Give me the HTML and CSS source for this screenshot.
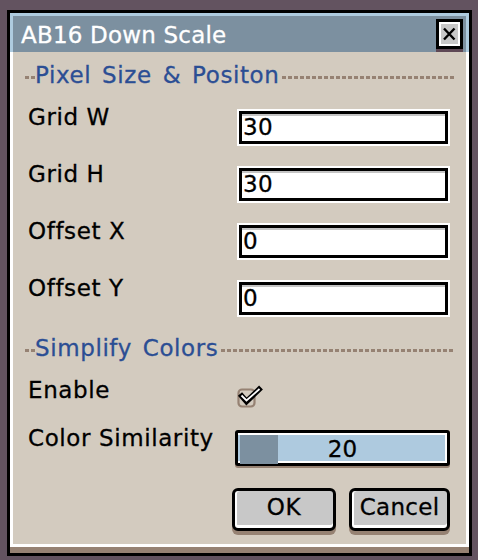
FILE: index.html
```html
<!DOCTYPE html>
<html>
<head>
<meta charset="utf-8">
<title>AB16 Down Scale</title>
<link rel="stylesheet" href="styles.css">
</head>
<body>
<div class="page">
  <div class="dialog">
    <div class="titlebar">
      <span class="title">AB16 Down Scale</span>
      <span class="close">
        <svg width="21" height="24" viewBox="0 0 21 24"><path d="M5 6.5 L15.5 17.5 M15.5 6.5 L5 17.5" stroke="#000" stroke-width="2.4" fill="none"/></svg>
      </span>
    </div>
    <div class="body">
      <div class="section">
        <span class="dash lead"></span>
        <span class="section-title">Pixel Size &amp; Positon</span>
        <span class="dash fill"></span>
      </div>
      <div class="row"><span class="label">Grid W</span><span class="field">30</span></div>
      <div class="row"><span class="label">Grid H</span><span class="field">30</span></div>
      <div class="row"><span class="label">Offset X</span><span class="field">0</span></div>
      <div class="row"><span class="label">Offset Y</span><span class="field">0</span></div>
      <div class="section s2">
        <span class="dash lead"></span>
        <span class="section-title">Simplify Colors</span>
        <span class="dash fill"></span>
      </div>
      <div class="row enable"><span class="label">Enable</span>
        <span class="check">
          <svg width="26" height="23" viewBox="0 0 26 23">
            <rect x="1.5" y="4.5" width="16" height="17" rx="3.5" fill="none" stroke="#968273" stroke-width="2.2"/>
            <path d="M3 9 L9.5 16.5 L24 2.5" stroke="#000" stroke-width="5.5" fill="none"/>
            <path d="M4.5 10.5 L9.5 15.5 L22.5 4" stroke="#fff" stroke-width="1.8" fill="none"/>
          </svg>
        </span>
      </div>
      <div class="row sim"><span class="label">Color Similarity</span>
        <span class="slider"><span class="slider-fill" style="width:38px"></span><span class="slider-value">20</span></span>
      </div>
      <div class="buttons">
        <span class="btn ok">OK</span>
        <span class="btn cancel">Cancel</span>
      </div>
    </div>
  </div>
</div>
</body>
</html>
```
FILE: styles.css
```css
html, body {
  margin: 0;
  padding: 0;
}
body {
  background: #635360;
  width: 478px;
  height: 560px;
  overflow: hidden;
  font-family: "DejaVu Sans", "Liberation Sans", sans-serif;
  font-size: 23px;
  line-height: 27px;
  color: #000;
  letter-spacing: 0.6px;
  -webkit-text-stroke: 0.3px currentColor;
}
.page {
  padding: 10px 0 0 7px;
}
.dialog {
  width: 465px;
  height: 546px;
  box-sizing: border-box;
  border: 3px solid #000;
  background: #968273;
  display: flex;
  flex-direction: column;
}
.titlebar {
  height: 39px;
  box-sizing: border-box;
  background: #7c90a0;
  border: 3px solid #aecbdf;
  border-bottom: 0;
  display: flex;
  align-items: flex-start;
  justify-content: space-between;
  padding: 6px 0 0 8px;
}
.title {
  color: #fff;
  letter-spacing: 0.2px;
}
.close {
  width: 27px;
  height: 30px;
  box-sizing: border-box;
  margin: -3px 3px 0 0;
  border: 3px solid #000;
  background: #c8c8c8;
  box-shadow: inset 0 0 0 2px #fff, 0 3px 0 #5e4855;
  display: flex;
  align-items: center;
  justify-content: center;
}
.close svg {
  display: block;
}
.body {
  flex: 1;
  background: #d3cbbf;
  border: 3px solid #fff;
  border-top: 0;
  margin-bottom: 6px;
  padding: 10px 16px 0 15px;
}
.section {
  display: flex;
  align-items: flex-start;
  height: 27px;
  margin-bottom: 15px;
}
.section.s2 {
  margin-top: 3px;
}
.section-title {
  color: #2b4e94;
  letter-spacing: 0.6px;
  word-spacing: 3px;
}
.dash {
  height: 3px;
  margin-top: 14px;
  background: repeating-linear-gradient(to right, #968273 0 4px, transparent 4px 6px);
}
.dash.lead {
  width: 10px;
  margin-left: -3px;
}
.dash.fill {
  flex: 1;
  margin-left: 3px;
  margin-right: -4px;
}
.row {
  display: grid;
  grid-template-columns: 211px 1fr;
  align-items: start;
  height: 57px;
}
.field {
  margin-top: 7px;
  width: 209px;
  height: 33px;
  box-sizing: border-box;
  border: 3px solid #000;
  background: #fff;
  box-shadow: inset 0 2px 0 #c4c4c4, 0 0 0 2px #fff;
  padding-left: 1px;
  letter-spacing: 0.3px;
}
.row.enable {
  height: 48px;
}
.check {
  margin-top: 8px;
  margin-left: -2px;
  width: 26px;
  height: 23px;
}
.check svg {
  display: block;
}
.row.sim {
  height: 63px;
}
.slider {
  margin-top: 5px;
  margin-left: -4px;
  height: 36px;
  box-sizing: border-box;
  border: 3px solid #000;
  border-radius: 3px;
  background: #aecadf;
  box-shadow: inset 0 2px 0 #fff, inset -2px 0 0 #fff, inset 0 -2px 0 #fff, 0 2px 0 #968273;
  display: grid;
  padding: 2px;
}
.slider-fill {
  grid-area: 1 / 1;
  justify-self: start;
  background: #7c90a0;
  height: 100%;
}
.slider-value {
  grid-area: 1 / 1;
  text-align: center;
  line-height: 30px;
  margin-top: -1px;
  letter-spacing: 0;
}
.buttons {
  display: flex;
  justify-content: flex-end;
  gap: 13px;
}
.btn {
  height: 43px;
  box-sizing: border-box;
  border: 3px solid #000;
  border-radius: 6px;
  background: #c8c8c8;
  box-shadow: inset 2px 0 0 #fff, inset 0 -3px 0 #fff, 0 4px 0 #968273;
  text-align: center;
  line-height: 33px;
  padding-bottom: 4px;
}
.btn.ok {
  width: 104px;
}
.btn.cancel {
  width: 101px;
  letter-spacing: 0.3px;
}
```
